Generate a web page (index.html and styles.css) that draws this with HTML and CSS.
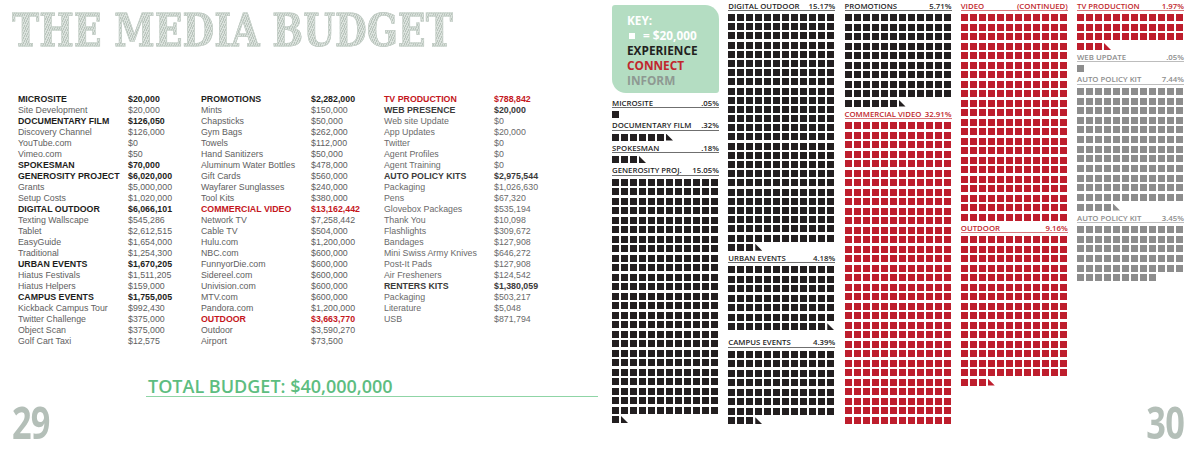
FILE: index.html
```html
<!DOCTYPE html>
<html lang="en">
<head>
<meta charset="utf-8">
<title>The Media Budget</title>
<link rel="stylesheet" href="styles.css">
</head>
<body>
<div class="spread">
  <section class="left">
    <h1 class="title">THE MEDIA BUDGET</h1>
    <div class="budget">
      <div class="bcol">
        <div class="row b"><span class="l">MICROSITE</span><span>$20,000</span></div>
        <div class="row"><span class="l">Site Development</span><span>$20,000</span></div>
        <div class="row b"><span class="l">DOCUMENTARY FILM</span><span>$126,050</span></div>
        <div class="row"><span class="l">Discovery Channel</span><span>$126,000</span></div>
        <div class="row"><span class="l">YouTube.com</span><span>$0</span></div>
        <div class="row"><span class="l">Vimeo.com</span><span>$50</span></div>
        <div class="row b"><span class="l">SPOKESMAN</span><span>$70,000</span></div>
        <div class="row b"><span class="l">GENEROSITY PROJECT</span><span>$6,020,000</span></div>
        <div class="row"><span class="l">Grants</span><span>$5,000,000</span></div>
        <div class="row"><span class="l">Setup Costs</span><span>$1,020,000</span></div>
        <div class="row b"><span class="l">DIGITAL OUTDOOR</span><span>$6,066,101</span></div>
        <div class="row"><span class="l">Texting Wallscape</span><span>$545,286</span></div>
        <div class="row"><span class="l">Tablet</span><span>$2,612,515</span></div>
        <div class="row"><span class="l">EasyGuide</span><span>$1,654,000</span></div>
        <div class="row"><span class="l">Traditional</span><span>$1,254,300</span></div>
        <div class="row b"><span class="l">URBAN EVENTS</span><span>$1,670,205</span></div>
        <div class="row"><span class="l">Hiatus Festivals</span><span>$1,511,205</span></div>
        <div class="row"><span class="l">Hiatus Helpers</span><span>$159,000</span></div>
        <div class="row b"><span class="l">CAMPUS EVENTS</span><span>$1,755,005</span></div>
        <div class="row"><span class="l">Kickback Campus Tour</span><span>$992,430</span></div>
        <div class="row"><span class="l">Twitter Challenge</span><span>$375,000</span></div>
        <div class="row"><span class="l">Object Scan</span><span>$375,000</span></div>
        <div class="row"><span class="l">Golf Cart Taxi</span><span>$12,575</span></div>
      </div>
      <div class="bcol">
        <div class="row b"><span class="l">PROMOTIONS</span><span>$2,282,000</span></div>
        <div class="row"><span class="l">Mints</span><span>$150,000</span></div>
        <div class="row"><span class="l">Chapsticks</span><span>$50,000</span></div>
        <div class="row"><span class="l">Gym Bags</span><span>$262,000</span></div>
        <div class="row"><span class="l">Towels</span><span>$112,000</span></div>
        <div class="row"><span class="l">Hand Sanitizers</span><span>$50,000</span></div>
        <div class="row"><span class="l">Aluminum Water Bottles</span><span>$478,000</span></div>
        <div class="row"><span class="l">Gift Cards</span><span>$560,000</span></div>
        <div class="row"><span class="l">Wayfarer Sunglasses</span><span>$240,000</span></div>
        <div class="row"><span class="l">Tool Kits</span><span>$380,000</span></div>
        <div class="row r"><span class="l">COMMERCIAL VIDEO</span><span>$13,162,442</span></div>
        <div class="row"><span class="l">Network TV</span><span>$7,258,442</span></div>
        <div class="row"><span class="l">Cable TV</span><span>$504,000</span></div>
        <div class="row"><span class="l">Hulu.com</span><span>$1,200,000</span></div>
        <div class="row"><span class="l">NBC.com</span><span>$600,000</span></div>
        <div class="row"><span class="l">FunnyorDie.com</span><span>$600,000</span></div>
        <div class="row"><span class="l">Sidereel.com</span><span>$600,000</span></div>
        <div class="row"><span class="l">Univision.com</span><span>$600,000</span></div>
        <div class="row"><span class="l">MTV.com</span><span>$600,000</span></div>
        <div class="row"><span class="l">Pandora.com</span><span>$1,200,000</span></div>
        <div class="row r"><span class="l">OUTDOOR</span><span>$3,663,770</span></div>
        <div class="row"><span class="l">Outdoor</span><span>$3,590,270</span></div>
        <div class="row"><span class="l">Airport</span><span>$73,500</span></div>
      </div>
      <div class="bcol c3">
        <div class="row r"><span class="l">TV PRODUCTION</span><span>$788,842</span></div>
        <div class="row b"><span class="l">WEB PRESENCE</span><span>$20,000</span></div>
        <div class="row"><span class="l">Web site Update</span><span>$0</span></div>
        <div class="row"><span class="l">App Updates</span><span>$20,000</span></div>
        <div class="row"><span class="l">Twitter</span><span>$0</span></div>
        <div class="row"><span class="l">Agent Profiles</span><span>$0</span></div>
        <div class="row"><span class="l">Agent Training</span><span>$0</span></div>
        <div class="row b"><span class="l">AUTO POLICY KITS</span><span>$2,975,544</span></div>
        <div class="row"><span class="l">Packaging</span><span>$1,026,630</span></div>
        <div class="row"><span class="l">Pens</span><span>$67,320</span></div>
        <div class="row"><span class="l">Glovebox Packages</span><span>$535,194</span></div>
        <div class="row"><span class="l">Thank You</span><span>$10,098</span></div>
        <div class="row"><span class="l">Flashlights</span><span>$309,672</span></div>
        <div class="row"><span class="l">Bandages</span><span>$127,908</span></div>
        <div class="row"><span class="l">Mini Swiss Army Knives</span><span>$646,272</span></div>
        <div class="row"><span class="l">Post-It Pads</span><span>$127,908</span></div>
        <div class="row"><span class="l">Air Fresheners</span><span>$124,542</span></div>
        <div class="row b"><span class="l">RENTERS KITS</span><span>$1,380,059</span></div>
        <div class="row"><span class="l">Packaging</span><span>$503,217</span></div>
        <div class="row"><span class="l">Literature</span><span>$5,048</span></div>
        <div class="row"><span class="l">USB</span><span>$871,794</span></div>
      </div>
    </div>
    <div class="total">TOTAL BUDGET: $40,000,000</div>
    <div class="pnum pl">29</div>
  </section>

  <section class="right">
    <div class="col first">
      <div class="key">
        <div class="kw">KEY:</div>
        <div class="kw"><span class="ksq"></span>= $20,000</div>
        <div class="kk">EXPERIENCE</div>
        <div class="kr">CONNECT</div>
        <div class="kg">INFORM</div>
      </div>
      <div class="hd k"><span>MICROSITE</span><span>.05%</span></div>
      <div class="grid k" data-n="1"></div>
      <div class="hd k"><span>DOCUMENTARY FILM</span><span>.32%</span></div>
      <div class="grid k" data-n="6" data-t="1"></div>
      <div class="hd k"><span>SPOKESMAN</span><span>.18%</span></div>
      <div class="grid k" data-n="3" data-t="1"></div>
      <div class="hd k"><span>GENEROSITY PROJ.</span><span>15.05%</span></div>
      <div class="grid k" data-n="301" data-t="1"></div>
    </div>
    <div class="col">
      <div class="hd k"><span>DIGITAL OUTDOOR</span><span>15.17%</span></div>
      <div class="grid k dense" data-n="303" data-t="1"></div>
      <div class="hd k"><span>URBAN EVENTS</span><span>4.18%</span></div>
      <div class="grid k spaced" data-n="83" data-t="1"></div>
      <div class="hd k"><span>CAMPUS EVENTS</span><span>4.39%</span></div>
      <div class="grid k" data-n="87" data-t="1"></div>
    </div>
    <div class="col">
      <div class="hd k"><span>PROMOTIONS</span><span>5.71%</span></div>
      <div class="grid k" data-n="114" data-t="1"></div>
      <div class="hd r"><span>COMMERCIAL VIDEO</span><span>32.91%</span></div>
      <div class="grid r" data-n="384"></div>
    </div>
    <div class="col">
      <div class="hd r"><span>VIDEO</span><span>(CONTINUED)</span></div>
      <div class="grid r" data-n="264"></div>
      <div class="hd r"><span>OUTDOOR</span><span>9.16%</span></div>
      <div class="grid r" data-n="183" data-t="1"></div>
    </div>
    <div class="col last">
      <div class="hd r"><span>TV PRODUCTION</span><span>1.97%</span></div>
      <div class="grid r" data-n="39" data-t="1"></div>
      <div class="hd g"><span>WEB UPDATE</span><span>.05%</span></div>
      <div class="grid g" data-n="1"></div>
      <div class="hd g"><span>AUTO POLICY KIT</span><span>7.44%</span></div>
      <div class="grid g" data-n="148" data-t="1"></div>
      <div class="hd g"><span>AUTO POLICY KIT</span><span>3.45%</span></div>
      <div class="grid g" data-n="69"></div>
      <div class="pnum pr">30</div>
    </div>
  </section>
</div>
<script src="script.js"></script>
</body>
</html>
```

FILE: styles.css
```css
* { box-sizing: border-box; }
html, body { margin: 0; padding: 0; }
body {
  width: 1200px;
  height: 451px;
  overflow: hidden;
  background: #ffffff;
  font-family: "Liberation Sans", Arial, sans-serif;
}
.spread {
  display: flex;
  width: 1200px;
  height: 451px;
}

/* ---------- left page ---------- */
.left {
  width: 600px;
  flex: none;
  display: flex;
  flex-direction: column;
}
.title {
  margin: 9px 0 0 12px;
  height: 44px;
  font-family: "DejaVu Serif", serif;
  font-weight: 700;
  font-size: 44px;
  line-height: 44px;
  white-space: nowrap;
  transform: scaleX(0.83);
  transform-origin: left top;
  background: repeating-linear-gradient(118deg, #dbe2dd 0 1.4px, #b9c4bc 1.4px 2.4px);
  -webkit-background-clip: text;
  background-clip: text;
  color: transparent;
  -webkit-text-stroke: 0.8px #c3cdc6;
}
.budget {
  display: flex;
  margin: 41px 0 0 18px;
}
.bcol {
  width: 183px;
  flex: none;
}
.row {
  display: flex;
  height: 11px;
  line-height: 11px;
  font-size: 8.8px;
  color: #5e5e5e;
  white-space: nowrap;
}
.row .l {
  width: 110px;
  flex: none;
}
.row.b { font-weight: 700; color: #1d1d1b; }
.c3 .row.b { color: #3a3a3a; }
.c3 .row { color: #6a6a6a; }
.row.r { font-weight: 700; color: #c4161c; }

.total {
  margin: 30px 0 0 146px;
  width: 452px;
  height: 19.5px;
  padding-left: 2px;
  border-bottom: 1.5px solid #8fd5a6;
  font-family: "Open Sans", sans-serif;
  font-weight: 600;
  font-size: 18px;
  line-height: 18px;
  color: #5dbd80;
  white-space: nowrap;
}
.pnum {
  font-family: "Open Sans", sans-serif;
  font-weight: 700;
  font-size: 44px;
  line-height: 44px;
  height: 44px;
  color: #b4bfb8;
  letter-spacing: -1px;
}
.pl {
  margin: 3px 0 0 12px;
  transform: scaleX(0.78);
  transform-origin: left top;
}

/* ---------- right page ---------- */
.right {
  flex: 1;
  display: flex;
  gap: 9.25px;
  padding-left: 12px;
}
.col {
  width: 107px;
  flex: none;
  display: flex;
  flex-direction: column;
  padding-top: 1.5px;
}
.col.first { padding-top: 5px; }

.key {
  height: 88px;
  margin-bottom: 5.5px;
  padding: 7.5px 0 0 15px;
  background: #b4ddc2;
  border-radius: 3px 14px 3px 14px;
  font-family: "Open Sans", sans-serif;
  font-weight: 700;
  font-size: 11.8px;
  line-height: 15px;
  white-space: nowrap;
}
.kw { color: #ffffff; }
.kk { color: #231f20; }
.kr { color: #c1272d; }
.kg { color: #8e9992; }
.ksq {
  display: inline-block;
  width: 6px;
  height: 6px;
  margin: 0 8px 0 2px;
  background: #ffffff;
  vertical-align: 1px;
}

.hd {
  display: flex;
  justify-content: space-between;
  height: 9.5px;
  margin-bottom: 3px;
  border-bottom: 1.5px solid #6f6f6f;
  font-family: "Open Sans", sans-serif;
  font-weight: 600;
  font-size: 7.8px;
  line-height: 8px;
  white-space: nowrap;
  color: #1f1f1f;
}
.hd.r { color: #c1272d; border-bottom-color: #d9797d; }
.hd.g { color: #8d8d8d; border-bottom-color: #bdbdbd; }

.grid {
  display: grid;
  grid-template-columns: repeat(12, 7px);
  grid-auto-rows: 7px;
  column-gap: 2px;
  row-gap: 2.5px;
  margin-bottom: 3px;
}
.grid.dense { row-gap: 2.2px; }
.grid.spaced { margin-bottom: 8px; }
.col.last .grid { row-gap: 2.65px; }

.sq { width: 7px; height: 7px; }
.grid.k .sq { background: #231f20; }
.grid.r .sq { background: #be1e2d; }
.grid.g .sq { background: #8d8d8d; }
.sq.tri { clip-path: polygon(0 0, 0 100%, 100% 100%); }

.pr {
  margin-top: auto;
  margin-bottom: 7.5px;
  text-align: right;
  transform: scaleX(0.78);
  transform-origin: right top;
}
```

FILE: script.js
```js
document.querySelectorAll('.grid').forEach(function (g) {
  var n = parseInt(g.dataset.n, 10) || 0;
  var frag = document.createDocumentFragment();
  for (var i = 0; i < n; i++) {
    var d = document.createElement('div');
    d.className = 'sq';
    frag.appendChild(d);
  }
  if (g.dataset.t) {
    var t = document.createElement('div');
    t.className = 'sq tri';
    frag.appendChild(t);
  }
  g.appendChild(frag);
});
```
